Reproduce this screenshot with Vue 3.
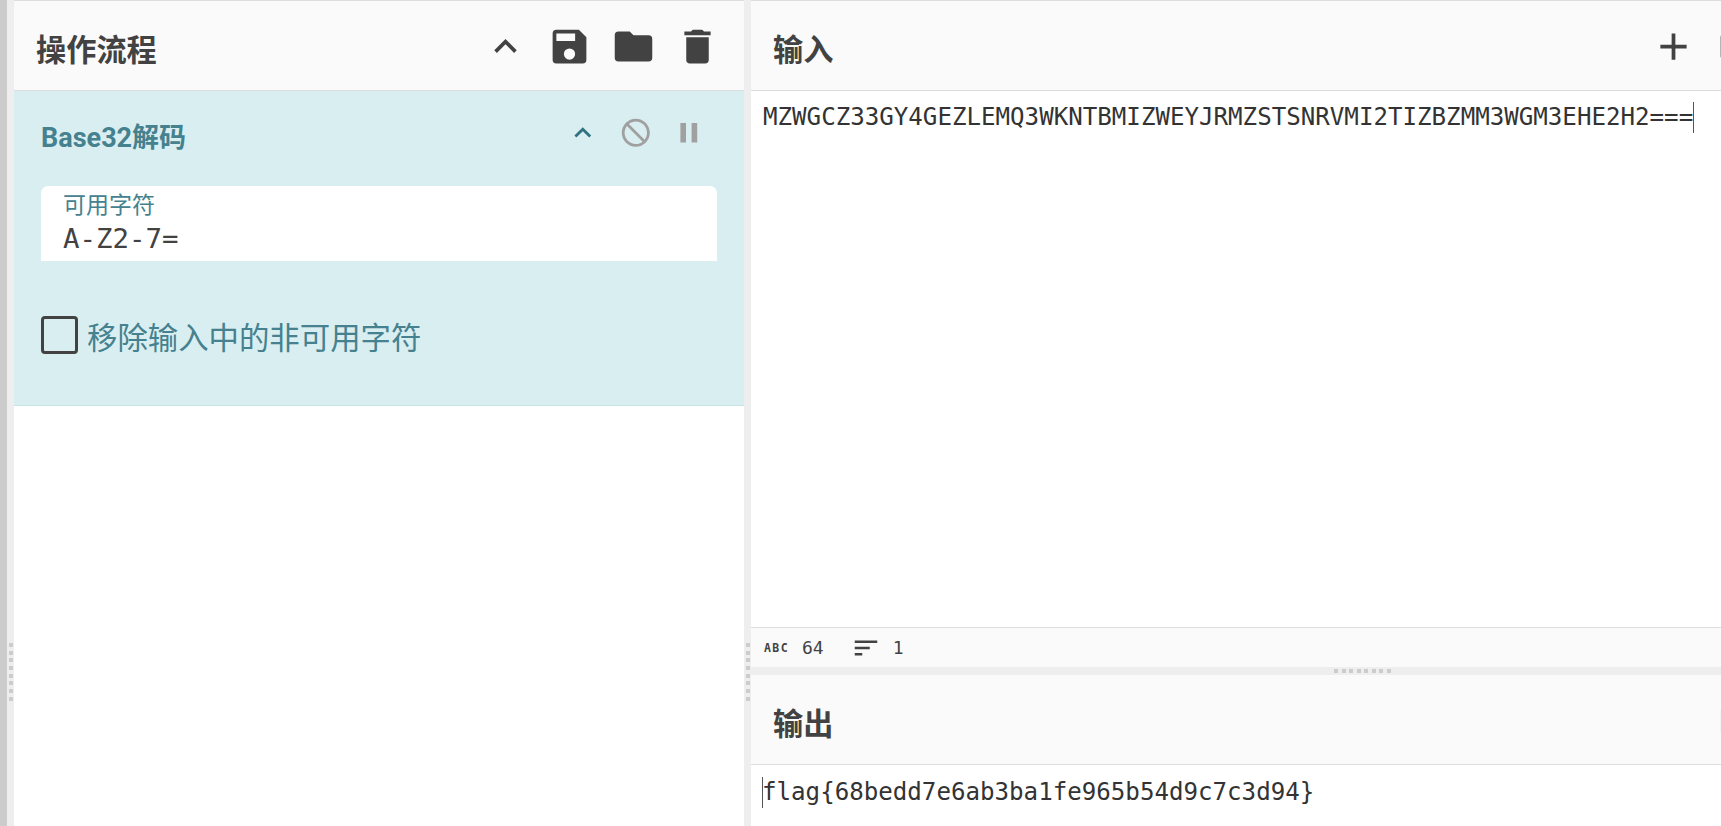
<script setup>
const icons = {
  up: 'M7.41 15.41 12 10.83l4.59 4.58L18 14l-6-6-6 6z',
  save: 'M17 3H5a2 2 0 0 0-2 2v14a2 2 0 0 0 2 2h14a2 2 0 0 0 2-2V7l-4-4zm-5 16a3 3 0 1 1 0-6 3 3 0 0 1 0 6zm3-10H5V5h10v4z',
  folder: 'M10 4H4a2 2 0 0 0-2 2v12a2 2 0 0 0 2 2h16a2 2 0 0 0 2-2V8a2 2 0 0 0-2-2h-8l-2-2z',
  del: 'M6 19a2 2 0 0 0 2 2h8a2 2 0 0 0 2-2V7H6v12zM19 4h-3.5l-1-1h-5l-1 1H5v2h14V4z',
  block: 'M12 2C6.47 2 2 6.47 2 12s4.47 10 10 10 10-4.47 10-10S17.53 2 12 2zm0 18c-4.41 0-8-3.59-8-8 0-1.85.63-3.55 1.69-4.9L16.9 18.31C15.55 19.37 13.85 20 12 20zm6.31-3.1L7.1 5.69C8.45 4.63 10.15 4 12 4c4.41 0 8 3.59 8 8 0 1.85-.63 3.55-1.69 4.9z',
  pause: 'M6 19h4V5H6v14zm8-14v14h4V5h-4z',
  add: 'M19 13h-6v6h-2v-6H5v-2h6V5h2v6h6v2z',
  sort: 'M3 18h6v-2H3v2zM3 6v2h18V6H3zm0 7h12v-2H3v2z',
  box: 'M5 5a2 2 0 0 0-2 2v10a2 2 0 0 0 2 2h14a2 2 0 0 0 2-2V7a2 2 0 0 0-2-2H5zm0 2h14v10H5V7z'
}
const dots = Array.from({ length: 8 }, (_, i) => i)
</script>

<template>
  <div class="app">
    <div class="edge"></div>
    <div class="gutter">
      <div class="grip"><i v-for="d in dots" :key="d"></i></div>
    </div>

    <section class="recipe">
      <header class="head">
        <h2>操作流程</h2>
        <div class="tools">
          <svg class="ic" viewBox="0 0 24 24"><path :d="icons.up" /></svg>
          <svg class="ic" viewBox="0 0 24 24"><path :d="icons.save" /></svg>
          <svg class="ic" viewBox="0 0 24 24"><path :d="icons.folder" /></svg>
          <svg class="ic" viewBox="0 0 24 24"><path :d="icons.del" /></svg>
        </div>
      </header>

      <div class="card">
        <div class="card-top">
          <h3>Base32解码</h3>
          <div class="card-tools">
            <svg class="sm teal" viewBox="0 0 24 24"><path :d="icons.up" /></svg>
            <svg class="sm grey" viewBox="0 0 24 24"><path :d="icons.block" /></svg>
            <svg class="sm grey" viewBox="0 0 24 24"><path :d="icons.pause" /></svg>
          </div>
        </div>
        <div class="field">
          <label>可用字符</label>
          <div class="val">A-Z2-7=</div>
        </div>
        <div class="check">
          <span class="cb"></span>
          <span class="check-label">移除输入中的非可用字符</span>
        </div>
      </div>
    </section>

    <div class="gutter">
      <div class="grip"><i v-for="d in dots" :key="d"></i></div>
    </div>

    <section class="io">
      <header class="head">
        <h2>输入</h2>
        <div class="io-tools">
          <svg class="ic" viewBox="0 0 24 24"><path :d="icons.add" /></svg>
          <svg class="ic" viewBox="0 0 24 24"><path :d="icons.box" /></svg>
        </div>
      </header>
      <div class="text input">MZWGCZ33GY4GEZLEMQ3WKNTBMIZWEYJRMZSTSNRVMI2TIZBZMM3WGM3EHE2H2===<span class="caret"></span></div>
      <footer class="status">
        <span class="abc">ABC</span>
        <span class="num">64</span>
        <svg class="sort" viewBox="0 0 24 24"><path :d="icons.sort" /></svg>
        <span class="num">1</span>
      </footer>
      <div class="divider">
        <div class="hgrip"><i v-for="d in dots" :key="d"></i></div>
      </div>
      <header class="head out-head">
        <h2>输出</h2>
        <div class="io-tools">
          <svg class="ic hidden" viewBox="0 0 24 24"><path :d="icons.add" /></svg>
          <svg class="ic pale" viewBox="0 0 24 24"><path :d="icons.box" /></svg>
        </div>
      </header>
      <div class="text output"><span class="caret"></span>flag{68bedd7e6ab3ba1fe965b54d9c7c3d94}</div>
    </section>
  </div>
</template>

<style>
html, body { margin: 0; background: #fff; overflow: hidden; }
</style>

<style scoped>
.app {
  width: 1721px;
  height: 826px;
  display: flex;
  overflow: hidden;
  background: #fff;
  font-family: Roboto, "Noto Sans CJK SC", sans-serif;
  color: #424242;
}
.edge { flex: 0 0 7px; background: #ccc; }
.gutter {
  flex: 0 0 7px;
  background: #eee;
  display: flex;
  flex-direction: column;
  align-items: center;
  padding-top: 643px;
  box-sizing: border-box;
}
.grip { display: flex; flex-direction: column; gap: 3.7px; }
.grip i { display: block; width: 4px; height: 4px; background: #ccc; }

.recipe { flex: 0 0 730px; display: flex; flex-direction: column; }
.io { flex: 0 0 1000px; display: flex; flex-direction: column; }

.head {
  flex: 0 0 auto;
  height: 89px;
  border-top: 1px solid #ddd;
  border-bottom: 1px solid #ddd;
  background: #fafafa;
  display: flex;
  align-items: center;
  justify-content: space-between;
  padding: 0 24px 0 22px;
}
.out-head { border-top: 0; }
.head h2 {
  margin: 0;
  font-size: 30.2px;
  font-weight: 700;
  line-height: 40px;
  padding-top: 11px;
}
.tools { display: flex; gap: 19px; margin-top: 1px; }
.ic { width: 45px; height: 45px; fill: #424242; display: block; }
.io-tools { display: flex; gap: 19px; margin-top: 1px; margin-right: -33px; }
.hidden { visibility: hidden; }
.pale { fill: #e6e6e6; }

.card {
  flex: 0 0 auto;
  height: 315px;
  box-sizing: border-box;
  background: #d9eef1;
  border-bottom: 1px solid #c7e4e4;
  padding: 0 27px;
  color: #45818e;
  display: flex;
  flex-direction: column;
}
.card-top {
  height: 95px;
  display: flex;
  align-items: center;
  justify-content: space-between;
}
.card-top h3 { margin: 0; font-size: 27px; font-weight: 700; line-height: 36px; padding-bottom: 2px; }
.card-tools { display: flex; gap: 19.4px; margin-right: 11.2px; margin-top: -11px; }
.sm { width: 33.6px; height: 33.6px; display: block; }
.teal { fill: #30727f; }
.grey { fill: #a0a0a0; }

.field {
  background: #fff;
  width: 676px;
  height: 75px;
  box-sizing: border-box;
  border-radius: 7px 7px 0 0;
  padding: 5px 22px 0;
  overflow: hidden;
}
.field label { display: block; font-size: 23px; line-height: 30px; }
.val {
  font-family: "DejaVu Sans Mono", monospace;
  font-size: 27.4px;
  line-height: 35px;
  color: #424242;
}
.check {
  margin-top: 55px;
  display: flex;
  align-items: flex-start;
  gap: 9px;
  font-size: 30.4px;
  line-height: 38px;
}
.check-label { padding-top: 4px; }
.cb {
  width: 37px;
  height: 38px;
  box-sizing: border-box;
  border: 3px solid #424242;
  border-radius: 4px;
}

.text {
  font-family: "DejaVu Sans Mono", monospace;
  font-size: 24.15px;
  color: #333;
  white-space: nowrap;
  padding-left: 12px;
  line-height: 31px;
}
.input { flex: 0 0 auto; height: 536px; box-sizing: border-box; padding-top: 11px; }
.output { padding-top: 12px; padding-left: 11px; }
.caret {
  display: inline-block;
  width: 1px;
  height: 31px;
  background: #555;
  vertical-align: top;
  margin-right: -1px;
}
.status {
  flex: 0 0 auto;
  height: 39px;
  border-top: 1px solid #ddd;
  background: #fafafa;
  display: flex;
  align-items: center;
  padding-left: 13px;
  font-family: "DejaVu Sans Mono", monospace;
}
.abc { font-size: 11.5px; font-weight: 700; letter-spacing: 1.4px; width: 38px; color: #424242; }
.num { font-size: 18px; color: #424242; }
.sort { width: 30px; height: 30px; fill: #424242; margin-left: 27px; margin-right: 12px; }
.divider {
  flex: 0 0 8px;
  background: #eee;
  position: relative;
}
.hgrip {
  position: absolute;
  left: 583px;
  top: 2px;
  display: flex;
  gap: 3.5px;
}
.hgrip i { display: block; width: 4px; height: 4px; background: #ccc; }
</style>
